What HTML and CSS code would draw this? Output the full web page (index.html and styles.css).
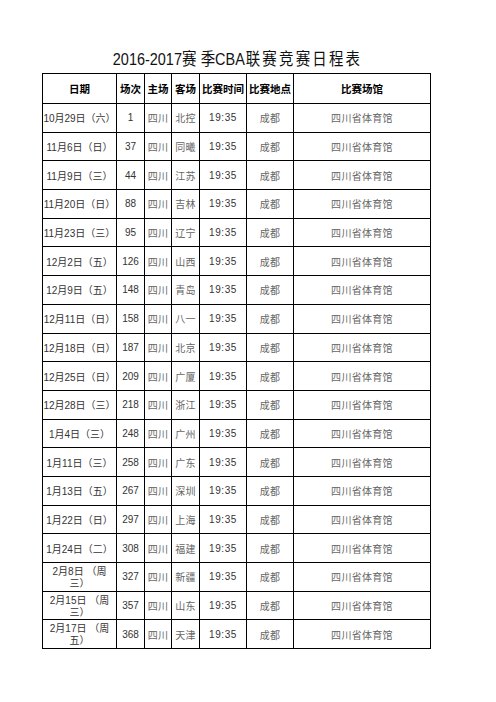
FILE: index.html
```html
<!DOCTYPE html>
<html lang="zh-CN">
<head>
<meta charset="utf-8">
<title>2016-2017赛季CBA联赛竞赛日程表</title>
<link rel="stylesheet" href="styles.css">
</head>
<body>
<div class="page">
  <div class="title"><span class="title-inner">2016-2017<span class="sp1">赛</span>季CBA<span class="sp2">联赛竞赛日程</span>表</span></div>
  <table class="schedule">
    <colgroup>
      <col class="c-date"><col class="c-no"><col class="c-home"><col class="c-away"><col class="c-time"><col class="c-city"><col class="c-venue">
    </colgroup>
    <thead>
      <tr><th>日期</th><th>场次</th><th>主场</th><th>客场</th><th>比赛时间</th><th>比赛地点</th><th>比赛场馆</th></tr>
    </thead>
    <tbody>
      <tr><td>10月29日（六）</td><td>1</td><td class="cj">四川</td><td class="cj">北控</td><td class="tm">19:35</td><td class="cj">成都</td><td class="cj">四川省体育馆</td></tr>
      <tr><td>11月6日（日）</td><td>37</td><td class="cj">四川</td><td class="cj">同曦</td><td class="tm">19:35</td><td class="cj">成都</td><td class="cj">四川省体育馆</td></tr>
      <tr><td>11月9日（三）</td><td>44</td><td class="cj">四川</td><td class="cj">江苏</td><td class="tm">19:35</td><td class="cj">成都</td><td class="cj">四川省体育馆</td></tr>
      <tr><td>11月20日（日）</td><td>88</td><td class="cj">四川</td><td class="cj">吉林</td><td class="tm">19:35</td><td class="cj">成都</td><td class="cj">四川省体育馆</td></tr>
      <tr><td>11月23日（三）</td><td>95</td><td class="cj">四川</td><td class="cj">辽宁</td><td class="tm">19:35</td><td class="cj">成都</td><td class="cj">四川省体育馆</td></tr>
      <tr><td>12月2日（五）</td><td>126</td><td class="cj">四川</td><td class="cj">山西</td><td class="tm">19:35</td><td class="cj">成都</td><td class="cj">四川省体育馆</td></tr>
      <tr><td>12月9日（五）</td><td>148</td><td class="cj">四川</td><td class="cj">青岛</td><td class="tm">19:35</td><td class="cj">成都</td><td class="cj">四川省体育馆</td></tr>
      <tr><td>12月11日（日）</td><td>158</td><td class="cj">四川</td><td class="cj">八一</td><td class="tm">19:35</td><td class="cj">成都</td><td class="cj">四川省体育馆</td></tr>
      <tr><td>12月18日（日）</td><td>187</td><td class="cj">四川</td><td class="cj">北京</td><td class="tm">19:35</td><td class="cj">成都</td><td class="cj">四川省体育馆</td></tr>
      <tr><td>12月25日（日）</td><td>209</td><td class="cj">四川</td><td class="cj">广厦</td><td class="tm">19:35</td><td class="cj">成都</td><td class="cj">四川省体育馆</td></tr>
      <tr><td>12月28日（三）</td><td>218</td><td class="cj">四川</td><td class="cj">浙江</td><td class="tm">19:35</td><td class="cj">成都</td><td class="cj">四川省体育馆</td></tr>
      <tr><td>1月4日（三）</td><td>248</td><td class="cj">四川</td><td class="cj">广州</td><td class="tm">19:35</td><td class="cj">成都</td><td class="cj">四川省体育馆</td></tr>
      <tr><td>1月11日（三）</td><td>258</td><td class="cj">四川</td><td class="cj">广东</td><td class="tm">19:35</td><td class="cj">成都</td><td class="cj">四川省体育馆</td></tr>
      <tr><td>1月13日（五）</td><td>267</td><td class="cj">四川</td><td class="cj">深圳</td><td class="tm">19:35</td><td class="cj">成都</td><td class="cj">四川省体育馆</td></tr>
      <tr><td>1月22日（日）</td><td>297</td><td class="cj">四川</td><td class="cj">上海</td><td class="tm">19:35</td><td class="cj">成都</td><td class="cj">四川省体育馆</td></tr>
      <tr><td>1月24日（二）</td><td>308</td><td class="cj">四川</td><td class="cj">福建</td><td class="tm">19:35</td><td class="cj">成都</td><td class="cj">四川省体育馆</td></tr>
      <tr><td class="wrap">2月8日 （周<br>三）</td><td>327</td><td class="cj">四川</td><td class="cj">新疆</td><td class="tm">19:35</td><td class="cj">成都</td><td class="cj">四川省体育馆</td></tr>
      <tr><td class="wrap">2月15日 （周<br>三）</td><td>357</td><td class="cj">四川</td><td class="cj">山东</td><td class="tm">19:35</td><td class="cj">成都</td><td class="cj">四川省体育馆</td></tr>
      <tr><td class="wrap">2月17日 （周<br>五）</td><td>368</td><td class="cj">四川</td><td class="cj">天津</td><td class="tm">19:35</td><td class="cj">成都</td><td class="cj">四川省体育馆</td></tr>
    </tbody>
  </table>
</div>
</body>
</html>
```
FILE: styles.css
```css
html, body {
  margin: 0;
  padding: 0;
  background: #fff;
}

.page {
  padding: 50px 0 0 42px;
  width: 388px;
  font-family: "Liberation Sans", "Noto Sans CJK SC", sans-serif;
}

.title {
  height: 20px;
  line-height: 20px;
  text-align: center;
  font-size: 17px;
  color: #111;
  white-space: nowrap;
}

.title-inner {
  display: inline-block;
  transform: scaleX(0.85);
  transform-origin: center;
}

.sp1 {
  letter-spacing: 5px;
}

.sp2 {
  letter-spacing: 2.6px;
  margin-left: 1px;
}

.schedule {
  margin-top: 2.5px;
  border-collapse: collapse;
  table-layout: fixed;
  width: 388px;
}

.c-date { width: 74px; }
.c-no { width: 28px; }
.c-home { width: 27px; }
.c-away { width: 28px; }
.c-time { width: 47px; }
.c-city { width: 47px; }
.c-venue { width: 137px; }

.schedule th,
.schedule td {
  border: 1px solid #000;
  padding: 0;
  text-align: center;
  vertical-align: middle;
  white-space: nowrap;
  overflow: hidden;
}

.schedule thead tr {
  height: 30.5px;
}

.schedule tbody tr {
  height: 28.7px;
}

.schedule th {
  font-size: 10.5px;
  font-weight: bold;
  color: #000;
}

.schedule td {
  font-size: 10px;
  color: #333;
}

.schedule td.cj {
  color: #666;
  letter-spacing: 0.3px;
}

.schedule td.tm {
  letter-spacing: 0.6px;
}

.schedule td.wrap {
  white-space: normal;
  line-height: 12px;
  padding-top: 2px;
}
```
